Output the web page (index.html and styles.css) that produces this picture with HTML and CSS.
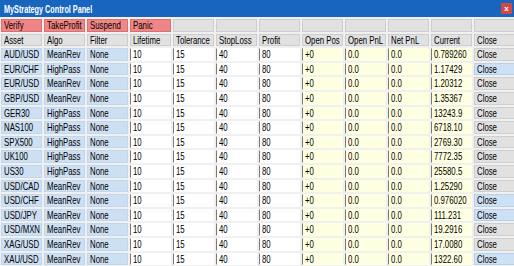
FILE: index.html
```html
<!DOCTYPE html>
<html>
<head>
<meta charset="utf-8">
<link rel="stylesheet" href="styles.css">
</head>
<body>
<div class="window">
  <div class="titlebar">
    <span class="title">MyStrategy Control Panel</span>
    <span class="close-btn"><span>x</span></span>
  </div>
  <div class="grid">
    <div class="cell btn"><span>Verify</span></div><div class="cell btn"><span>TakeProfit</span></div><div class="cell btn"><span>Suspend</span></div><div class="cell btn"><span>Panic</span></div>
    <div class="cell hd"></div><div class="cell hd"></div><div class="cell hd"></div><div class="cell hd"></div><div class="cell hd"></div><div class="cell hd"></div><div class="cell hd"></div><div class="cell hd"></div>

    <div class="cell hd"><span>Asset</span></div><div class="cell hd"><span>Algo</span></div><div class="cell hd"><span>Filter</span></div><div class="cell hd"><span>Lifetime</span></div><div class="cell hd"><span>Tolerance</span></div><div class="cell hd"><span>StopLoss</span></div><div class="cell hd"><span>Profit</span></div><div class="cell hd"><span>Open Pos</span></div><div class="cell hd"><span>Open PnL</span></div><div class="cell hd"><span>Net PnL</span></div><div class="cell hd"><span>Current</span></div><div class="cell hd"><span>Close</span></div>

    <div class="cell bl"><span>AUD/USD</span></div><div class="cell bl"><span>MeanRev</span></div><div class="cell bl"><span>None</span></div><div class="cell wh"><span>10</span></div><div class="cell wh"><span>15</span></div><div class="cell wh"><span>40</span></div><div class="cell wh"><span>80</span></div><div class="cell ye"><span>+0</span></div><div class="cell ye"><span>0.0</span></div><div class="cell ye"><span>0.0</span></div><div class="cell ye"><span>0.789260</span></div><div class="cell cl"><span>Close</span></div>
    <div class="cell bl"><span>EUR/CHF</span></div><div class="cell bl"><span>HighPass</span></div><div class="cell bl"><span>None</span></div><div class="cell wh"><span>10</span></div><div class="cell wh"><span>15</span></div><div class="cell wh"><span>40</span></div><div class="cell wh"><span>80</span></div><div class="cell ye"><span>+0</span></div><div class="cell ye"><span>0.0</span></div><div class="cell ye"><span>0.0</span></div><div class="cell ye"><span>1.17429</span></div><div class="cell cl on"><span>Close</span></div>
    <div class="cell bl"><span>EUR/USD</span></div><div class="cell bl"><span>MeanRev</span></div><div class="cell bl"><span>None</span></div><div class="cell wh"><span>10</span></div><div class="cell wh"><span>15</span></div><div class="cell wh"><span>40</span></div><div class="cell wh"><span>80</span></div><div class="cell ye"><span>+0</span></div><div class="cell ye"><span>0.0</span></div><div class="cell ye"><span>0.0</span></div><div class="cell ye"><span>1.20312</span></div><div class="cell cl"><span>Close</span></div>
    <div class="cell bl"><span>GBP/USD</span></div><div class="cell bl"><span>MeanRev</span></div><div class="cell bl"><span>None</span></div><div class="cell wh"><span>10</span></div><div class="cell wh"><span>15</span></div><div class="cell wh"><span>40</span></div><div class="cell wh"><span>80</span></div><div class="cell ye"><span>+0</span></div><div class="cell ye"><span>0.0</span></div><div class="cell ye"><span>0.0</span></div><div class="cell ye"><span>1.35367</span></div><div class="cell cl"><span>Close</span></div>
    <div class="cell bl"><span>GER30</span></div><div class="cell bl"><span>HighPass</span></div><div class="cell bl"><span>None</span></div><div class="cell wh"><span>10</span></div><div class="cell wh"><span>15</span></div><div class="cell wh"><span>40</span></div><div class="cell wh"><span>80</span></div><div class="cell ye"><span>+0</span></div><div class="cell ye"><span>0.0</span></div><div class="cell ye"><span>0.0</span></div><div class="cell ye"><span>13243.9</span></div><div class="cell cl"><span>Close</span></div>
    <div class="cell bl"><span>NAS100</span></div><div class="cell bl"><span>HighPass</span></div><div class="cell bl"><span>None</span></div><div class="cell wh"><span>10</span></div><div class="cell wh"><span>15</span></div><div class="cell wh"><span>40</span></div><div class="cell wh"><span>80</span></div><div class="cell ye"><span>+0</span></div><div class="cell ye"><span>0.0</span></div><div class="cell ye"><span>0.0</span></div><div class="cell ye"><span>6718.10</span></div><div class="cell cl"><span>Close</span></div>
    <div class="cell bl"><span>SPX500</span></div><div class="cell bl"><span>HighPass</span></div><div class="cell bl"><span>None</span></div><div class="cell wh"><span>10</span></div><div class="cell wh"><span>15</span></div><div class="cell wh"><span>40</span></div><div class="cell wh"><span>80</span></div><div class="cell ye"><span>+0</span></div><div class="cell ye"><span>0.0</span></div><div class="cell ye"><span>0.0</span></div><div class="cell ye"><span>2769.30</span></div><div class="cell cl"><span>Close</span></div>
    <div class="cell bl"><span>UK100</span></div><div class="cell bl"><span>HighPass</span></div><div class="cell bl"><span>None</span></div><div class="cell wh"><span>10</span></div><div class="cell wh"><span>15</span></div><div class="cell wh"><span>40</span></div><div class="cell wh"><span>80</span></div><div class="cell ye"><span>+0</span></div><div class="cell ye"><span>0.0</span></div><div class="cell ye"><span>0.0</span></div><div class="cell ye"><span>7772.35</span></div><div class="cell cl"><span>Close</span></div>
    <div class="cell bl"><span>US30</span></div><div class="cell bl"><span>HighPass</span></div><div class="cell bl"><span>None</span></div><div class="cell wh"><span>10</span></div><div class="cell wh"><span>15</span></div><div class="cell wh"><span>40</span></div><div class="cell wh"><span>80</span></div><div class="cell ye"><span>+0</span></div><div class="cell ye"><span>0.0</span></div><div class="cell ye"><span>0.0</span></div><div class="cell ye"><span>25580.5</span></div><div class="cell cl"><span>Close</span></div>
    <div class="cell bl"><span>USD/CAD</span></div><div class="cell bl"><span>MeanRev</span></div><div class="cell bl"><span>None</span></div><div class="cell wh"><span>10</span></div><div class="cell wh"><span>15</span></div><div class="cell wh"><span>40</span></div><div class="cell wh"><span>80</span></div><div class="cell ye"><span>+0</span></div><div class="cell ye"><span>0.0</span></div><div class="cell ye"><span>0.0</span></div><div class="cell ye"><span>1.25290</span></div><div class="cell cl"><span>Close</span></div>
    <div class="cell bl"><span>USD/CHF</span></div><div class="cell bl"><span>MeanRev</span></div><div class="cell bl"><span>None</span></div><div class="cell wh"><span>10</span></div><div class="cell wh"><span>15</span></div><div class="cell wh"><span>40</span></div><div class="cell wh"><span>80</span></div><div class="cell ye"><span>+0</span></div><div class="cell ye"><span>0.0</span></div><div class="cell ye"><span>0.0</span></div><div class="cell ye"><span>0.976020</span></div><div class="cell cl on"><span>Close</span></div>
    <div class="cell bl"><span>USD/JPY</span></div><div class="cell bl"><span>MeanRev</span></div><div class="cell bl"><span>None</span></div><div class="cell wh"><span>10</span></div><div class="cell wh"><span>15</span></div><div class="cell wh"><span>40</span></div><div class="cell wh"><span>80</span></div><div class="cell ye"><span>+0</span></div><div class="cell ye"><span>0.0</span></div><div class="cell ye"><span>0.0</span></div><div class="cell ye"><span>111.231</span></div><div class="cell cl on"><span>Close</span></div>
    <div class="cell bl"><span>USD/MXN</span></div><div class="cell bl"><span>MeanRev</span></div><div class="cell bl"><span>None</span></div><div class="cell wh"><span>10</span></div><div class="cell wh"><span>15</span></div><div class="cell wh"><span>40</span></div><div class="cell wh"><span>80</span></div><div class="cell ye"><span>+0</span></div><div class="cell ye"><span>0.0</span></div><div class="cell ye"><span>0.0</span></div><div class="cell ye"><span>19.2916</span></div><div class="cell cl"><span>Close</span></div>
    <div class="cell bl"><span>XAG/USD</span></div><div class="cell bl"><span>MeanRev</span></div><div class="cell bl"><span>None</span></div><div class="cell wh"><span>10</span></div><div class="cell wh"><span>15</span></div><div class="cell wh"><span>40</span></div><div class="cell wh"><span>80</span></div><div class="cell ye"><span>+0</span></div><div class="cell ye"><span>0.0</span></div><div class="cell ye"><span>0.0</span></div><div class="cell ye"><span>17.0080</span></div><div class="cell cl"><span>Close</span></div>
    <div class="cell bl"><span>XAU/USD</span></div><div class="cell bl"><span>MeanRev</span></div><div class="cell bl"><span>None</span></div><div class="cell wh"><span>10</span></div><div class="cell wh"><span>15</span></div><div class="cell wh"><span>40</span></div><div class="cell wh"><span>80</span></div><div class="cell ye"><span>+0</span></div><div class="cell ye"><span>0.0</span></div><div class="cell ye"><span>0.0</span></div><div class="cell ye"><span>1322.60</span></div><div class="cell cl on"><span>Close</span></div>
  </div>
</div>
</body>
</html>
```

FILE: styles.css
```css
html, body {
  margin: 0;
  padding: 0;
  background: #f0f0f0;
}
body {
  font-family: "Liberation Sans", Arial, sans-serif;
  font-size: 11px;
  color: #000;
}
.window {
  width: 514px;
  height: 266px;
  overflow: hidden;
  display: flex;
  flex-direction: column;
}
.titlebar {
  height: 17px;
  flex: none;
  background: #1865bf;
  color: #fff;
  display: flex;
  align-items: center;
  justify-content: space-between;
  padding: 0 2px 0 4px;
}
.title {
  display: inline-block;
  font-weight: bold;
  font-size: 10.5px;
  transform: scaleX(0.69);
  transform-origin: 0 50%;
  white-space: nowrap;
}
.close-btn {
  width: 11px;
  height: 11px;
  background: #d04848;
  color: #fff;
  display: flex;
  align-items: center;
  justify-content: center;
  font-size: 8px;
  font-weight: bold;
  line-height: 8px;
}
.grid {
  display: grid;
  grid-template-columns: repeat(12, 41px);
  grid-auto-rows: 12.6px;
  gap: 2px;
  padding: 2px 0 0 1px;
}
.cell {
  box-sizing: border-box;
  padding-left: 2px;
  line-height: 11px;
  white-space: nowrap;
  border: 1px solid transparent;
}
.cell > span {
  display: inline-block;
  transform: scaleX(0.71);
  transform-origin: 0 50%;
}
.btn { background: #f08585; border-color: #d97070; }
.hd { background: #e1e1e1; border-color: #cdcdcd; }
.bl { background: #cddff2; border-color: #c2d6ec; }
.wh { background: #ffffff; border-left-color: #7a7a7a; }
.ye { background: #ffffe1; border-left-color: #7a7a7a; }
.cl { background: #e1e1e1; border-color: #cfcfcf; }
.cl.on { background: #cde0f4; border-color: #b8d0ea; }
```
